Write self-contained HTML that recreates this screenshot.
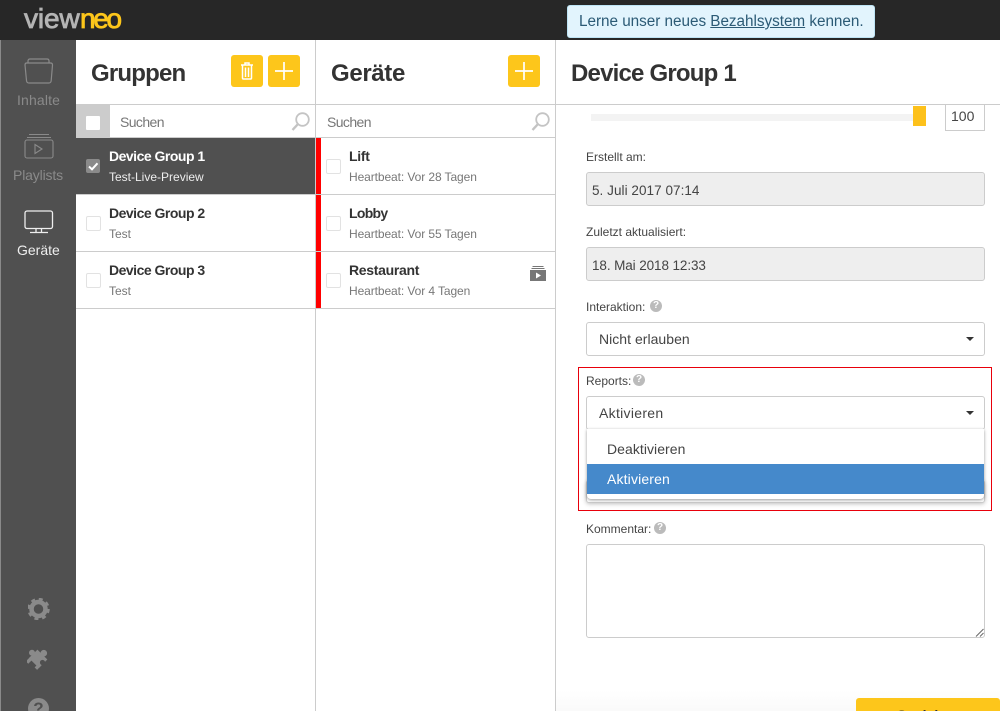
<!DOCTYPE html>
<html lang="de"><head><meta charset="utf-8"><title>viewneo</title>
<style>
html,body{margin:0;padding:0;width:1000px;height:711px;overflow:hidden;background:#fff}
body{font-family:"Liberation Sans",sans-serif;color:#333;position:relative}
.a,.t,svg{position:absolute}
.t{white-space:nowrap;line-height:1}
.h{font-size:24px;font-weight:bold;color:#333;top:62px;letter-spacing:-.8px}
.b{font-size:14px;font-weight:bold;color:#333;letter-spacing:-.3px}
.g{letter-spacing:-.5px}
.s{font-size:12px;color:#777}
.hb{letter-spacing:-.09px}
.l{font-size:12px;color:#444;left:586px}
.ctl{left:586px;width:397px;height:37px;border:1px solid #ccc;border-radius:3px;background:#fff}
.dis{background:#eee}
.v{font-size:14px;color:#444;left:599px}
.cb{left:86px;width:13px;height:13px;border:1px solid #e2e2e2;border-radius:2px;background:#fff}
.btn{width:32px;height:32px;top:55px;background:#fdc61b;border-radius:3px}
.line{background:#ccc}
.red{left:316px;width:5px;background:#f00}
.caret{width:0;height:0;border-left:4px solid transparent;border-right:4px solid transparent;border-top:4px solid #333;left:966px}
.q{width:12px;height:12px;border-radius:50%;background:#bbb;color:#fff;font-size:10px;font-weight:bold;line-height:12px;text-align:center}
.sr{font-size:14px;color:#777;letter-spacing:-.6px;top:115px}
</style></head><body>

<!-- top bar -->
<div class="a" style="left:0;top:0;width:1000px;height:40px;background:#272727"></div>
<div class="t" style="left:24px;top:5px;font-size:28px;letter-spacing:-.1px;-webkit-text-stroke:.8px #b4b4b4;color:#b4b4b4">view</div>
<div class="t" style="left:80px;top:5px;font-size:28px;letter-spacing:-2.300px;-webkit-text-stroke:.8px #fdc61b;color:#fdc61b">neo</div>
<div class="a" style="left:567px;top:5px;width:306px;height:31px;background:#e2f4fd;border:1px solid #bde4f5;border-radius:3px"></div>
<div class="t" style="left:579px;top:14px;font-size:15.300px;color:#2b5a75;letter-spacing:-.03px">Lerne unser neues <u>Bezahlsystem</u> kennen.</div>

<!-- sidebar -->
<div class="a" style="left:0;top:40px;width:76px;height:671px;background:#505050;border-left:1px solid #8a8a8a;box-sizing:border-box"></div>
<svg style="left:24px;top:58px" width="30" height="26" viewBox="0 0 30 26" fill="none" stroke="#8a8a8a" stroke-width="1.200"><path d="M4 5V3q0-2 2-2h17q2 0 2 2v2"/><path d="M2.500 5h24q2 0 2 2l-1.300 15.500q-.2 2.500-2.500 2.500H5q-2.300 0-2.500-2.500L1 7q0-2 1.500-2z"/></svg>
<div class="t" style="left:17px;top:93px;font-size:14px;color:#8a8a8a;letter-spacing:.15px">Inhalte</div>
<svg style="left:24px;top:133px" width="30" height="26" viewBox="0 0 30 26" fill="none" stroke="#8a8a8a" stroke-width="1.100"><path d="M5 1.500h20M3 4.500h24"/><rect x="1" y="7" width="28" height="18" rx="2"/><path d="M11 11.500l7 4.500-7 4.500z"/></svg>
<div class="t" style="left:13px;top:168px;font-size:14px;color:#8a8a8a;letter-spacing:-.15px">Playlists</div>
<svg style="left:24px;top:210px" width="30" height="24" viewBox="0 0 30 24" fill="none" stroke="#eee" stroke-width="1.300"><rect x="1" y="1" width="27.500" height="17.500" rx="2"/><path d="M6 22.500h18M12 18.500v4M17.500 18.500v4" /></svg>
<div class="t" style="left:17px;top:243px;font-size:14px;color:#eee">Geräte</div>
<svg style="left:28px;top:598px" width="22" height="22" viewBox="0 0 22 22"><circle cx="10.500" cy="11" r="7" fill="none" stroke="#8a8a8a" stroke-width="4.500"/><circle cx="10.500" cy="11" r="10" fill="none" stroke="#8a8a8a" stroke-width="2.500" stroke-dasharray="4 3.850"/></svg>
<svg style="left:27px;top:647px" width="23" height="23" viewBox="0 0 23 23" fill="#8a8a8a"><g transform="rotate(45 11.500 11.500)"><rect x="4.500" y="6" width="14" height="12"/><circle cx="11.500" cy="4" r="3.300"/><circle cx="2.800" cy="12" r="3"/><rect x="4.500" y="15" width="3.500" height="7.500"/><rect x="15" y="15" width="3.500" height="5.500"/></g><circle cx="15.500" cy="15.500" r="2.600" fill="#505050"/></svg>
<div class="a" style="left:28px;top:698px;width:21px;height:21px;border-radius:50%;background:#8a8a8a;color:#505050;font-size:17px;font-weight:bold;line-height:21px;text-align:center">?</div>

<!-- column dividers -->
<div class="a line" style="left:315px;top:40px;width:1px;height:671px"></div>
<div class="a line" style="left:555px;top:40px;width:1px;height:671px"></div>
<div class="a line" style="left:76px;top:104px;width:924px;height:1px"></div>

<!-- Gruppen -->
<div class="t h" style="left:91px">Gruppen</div>
<div class="a btn" style="left:231px"></div>
<svg style="left:240px;top:62px" width="14" height="18" viewBox="0 0 14 18" fill="none" stroke="#fff" stroke-width="1.500"><path d="M1 3h12M5 3V1h4v2"/><path d="M2.500 3v13q0 1 1 1h7q1 0 1-1V3M5.500 5.500v9.500M8.500 5.500v9.500"/></svg>
<div class="a btn" style="left:268px"></div>
<svg style="left:275px;top:62px" width="18" height="18" viewBox="0 0 18 18" stroke="#fff" stroke-width="1.700"><path d="M9 0v18M0 9h18"/></svg>

<div class="a" style="left:76px;top:105px;width:34px;height:33px;background:#ccc"></div>
<div class="a" style="left:86px;top:116px;width:14px;height:14px;background:#fff;border-radius:1px"></div>
<div class="t sr" style="left:120px">Suchen</div>
<svg style="left:290px;top:111px" width="21" height="21" viewBox="0 0 21 21" fill="none" stroke="#c4c4c4" stroke-width="1.800"><circle cx="12.500" cy="8.500" r="6.300"/><path d="M8 13L2.500 19" stroke-width="2.400"/></svg>

<div class="a" style="left:76px;top:138px;width:239px;height:56px;background:#505050"></div>
<div class="a line" style="left:76px;top:137px;width:479px;height:1px"></div>
<div class="a line" style="left:76px;top:194px;width:479px;height:1px"></div>
<div class="a line" style="left:76px;top:251px;width:479px;height:1px"></div>
<div class="a line" style="left:76px;top:308px;width:479px;height:1px"></div>

<div class="a" style="left:86px;top:159px;width:14px;height:14px;background:#8a8a8a;border-radius:2px"></div>
<svg style="left:86px;top:159px" width="14" height="14" viewBox="0 0 14 14" fill="none" stroke="#fff" stroke-width="2"><path d="M3 7.500l3 2.800 5.500-6"/></svg>
<div class="t b g" style="left:109px;top:149px;color:#fff">Device Group 1</div>
<div class="t s" style="left:109px;top:171px;color:#eee">Test-Live-Preview</div>

<div class="a cb" style="top:216px"></div>
<div class="t b g" style="left:109px;top:206px">Device Group 2</div>
<div class="t s" style="left:109px;top:228px">Test</div>

<div class="a cb" style="top:273px"></div>
<div class="t b g" style="left:109px;top:263px">Device Group 3</div>
<div class="t s" style="left:109px;top:285px">Test</div>

<!-- Geräte -->
<div class="t h" style="left:331px;letter-spacing:-.35px">Geräte</div>
<div class="a btn" style="left:508px"></div>
<svg style="left:515px;top:62px" width="18" height="18" viewBox="0 0 18 18" stroke="#fff" stroke-width="1.700"><path d="M9 0v18M0 9h18"/></svg>
<div class="t sr" style="left:327px">Suchen</div>
<svg style="left:530px;top:111px" width="21" height="21" viewBox="0 0 21 21" fill="none" stroke="#c4c4c4" stroke-width="1.800"><circle cx="12.500" cy="8.500" r="6.300"/><path d="M8 13L2.500 19" stroke-width="2.400"/></svg>

<div class="a red" style="top:138px;height:56px"></div>
<div class="a red" style="top:195px;height:56px"></div>
<div class="a red" style="top:252px;height:56px"></div>

<div class="a cb" style="left:326px;top:159px"></div>
<div class="t b" style="left:349px;top:149px">Lift</div>
<div class="t s hb" style="left:349px;top:171px">Heartbeat: Vor 28 Tagen</div>
<div class="a cb" style="left:326px;top:216px"></div>
<div class="t b" style="left:349px;top:206px;letter-spacing:-.7px">Lobby</div>
<div class="t s hb" style="left:349px;top:228px">Heartbeat: Vor 55 Tagen</div>
<div class="a cb" style="left:326px;top:273px"></div>
<div class="t b" style="left:349px;top:263px">Restaurant</div>
<div class="t s hb" style="left:349px;top:285px">Heartbeat: Vor 4 Tagen</div>
<svg style="left:530px;top:266px" width="16" height="15" viewBox="0 0 16 15"><path d="M2.500 .5h11M1.500 2.500h13" stroke="#777" fill="none"/><rect x="0" y="4" width="16" height="11" fill="#777"/><path d="M6 6.500l5 3-5 3z" fill="#fff"/></svg>

<!-- Detail -->
<div class="t h" style="left:571px">Device Group 1</div>
<div class="a" style="left:591px;top:114px;width:330px;height:7px;background:#f3f3f3"></div>
<div class="a" style="left:913px;top:106px;width:13px;height:20px;background:#fdc11b"></div>
<div class="a" style="left:945px;top:105px;width:38px;height:25px;border:1px solid #ccc;border-top:0;background:#fff"></div>
<div class="t" style="left:951px;top:109px;font-size:14px;color:#444">100</div>

<div class="t l" style="top:151px">Erstellt am:</div>
<div class="a ctl dis" style="top:172px;height:32px"></div>
<div class="t v" style="left:592px;top:184px;font-size:13.500px;letter-spacing:.05px">5. Juli 2017 07:14</div>
<div class="t l" style="top:226px">Zuletzt aktualisiert:</div>
<div class="a ctl dis" style="top:247px;height:32px"></div>
<div class="t v" style="left:592px;top:259px;font-size:13.500px;letter-spacing:-.1px">18. Mai 2018 12:33</div>

<div class="t l" style="top:301px">Interaktion:</div>
<div class="a q" style="left:650px;top:300px">?</div>
<div class="a ctl" style="top:322px;height:32px"></div>
<div class="t v" style="top:332px;letter-spacing:.03px">Nicht erlauben</div>
<div class="a caret" style="top:337px"></div>

<!-- red highlight -->
<div class="a" style="left:578px;top:367px;width:412px;height:142px;border:1px solid #e8000b;box-sizing:content-box"></div>
<div class="t l" style="top:375px">Reports:</div>
<div class="a q" style="left:633px;top:374px">?</div>
<div class="a ctl" style="top:396px;height:32px"></div>
<div class="t v" style="top:406px;letter-spacing:.3px">Aktivieren</div>
<div class="a caret" style="top:411px"></div>
<div class="a ctl" style="top:480px;height:21px;box-shadow:0 1px 4px rgba(0,0,0,.25)"></div>
<div class="a" style="left:587px;top:429px;width:397px;height:70px;background:#fff;border-radius:0 0 4px 4px;box-shadow:0 1px 3px rgba(0,0,0,.4)"></div>
<div class="a" style="left:587px;top:464px;width:397px;height:30px;background:#4589cb"></div>
<div class="t" style="left:607px;top:442px;font-size:14px;color:#444;letter-spacing:.05px">Deaktivieren</div>
<div class="t" style="left:607px;top:472px;font-size:14px;color:#fff;letter-spacing:.15px">Aktivieren</div>

<div class="t l" style="top:523px">Kommentar:</div>
<div class="a q" style="left:654px;top:522px">?</div>
<div class="a ctl" style="top:544px;height:92px"></div>
<svg style="left:975px;top:628px" width="9" height="9" viewBox="0 0 9 9" stroke="#666" stroke-width="1"><path d="M1 8.500L8.500 1M5 8.500L8.500 5"/></svg>

<!-- bottom fade and button -->
<div class="a" style="left:556px;top:690px;width:444px;height:21px;background:linear-gradient(#fff,#fafafa)"></div>
<div class="a" style="left:856px;top:698px;width:144px;height:13px;background:#fdc61b;border-radius:3px 3px 0 0;overflow:hidden"><div class="t" style="left:41px;top:10px;font-size:14px;font-weight:bold;color:#333">Speichern</div></div>
</body></html>
